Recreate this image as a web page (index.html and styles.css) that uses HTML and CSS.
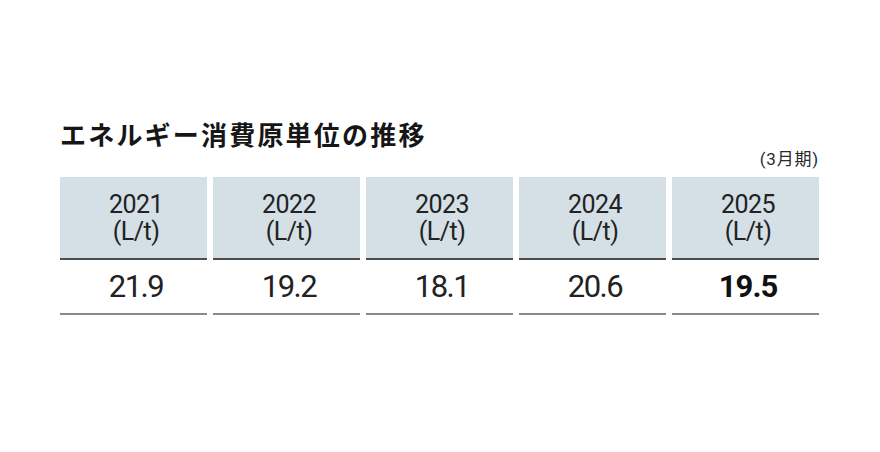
FILE: index.html
```html
<!DOCTYPE html>
<html lang="ja">
<head>
<meta charset="utf-8">
<link rel="stylesheet" href="styles.css">
</head>
<body>
<div class="wrap">
  <h2 class="title">エネルギー消費原単位の推移</h2>
  <div class="unit">(3月期)</div>
  <div class="grid">
    <div class="head"><span>2021</span><span>(L/t)</span></div>
    <div class="head"><span>2022</span><span>(L/t)</span></div>
    <div class="head"><span>2023</span><span>(L/t)</span></div>
    <div class="head"><span>2024</span><span>(L/t)</span></div>
    <div class="head"><span>2025</span><span>(L/t)</span></div>
    <div class="val">21.9</div>
    <div class="val">19.2</div>
    <div class="val">18.1</div>
    <div class="val">20.6</div>
    <div class="val strong">19.5</div>
  </div>
</div>
</body>
</html>
```
FILE: styles.css
```css
html, body {
  margin: 0;
  padding: 0;
  background: #ffffff;
}
body {
  width: 880px;
  height: 452px;
  overflow: hidden;
  color: #222222;
}
.wrap {
  width: 759px;
  margin-left: 60px;
  padding-top: 119px;
}
.title {
  margin: 0;
  font-family: "Noto Sans CJK JP", sans-serif;
  font-weight: 700;
  font-size: 26px;
  line-height: 30px;
  letter-spacing: 2.2px;
  color: #161616;
}
.unit {
  text-align: right;
  font-family: Roboto, "Noto Sans CJK JP", sans-serif;
  font-size: 17px;
  line-height: 18px;
  height: 18px;
  padding-top: 1px;
  padding-bottom: 9px;
  letter-spacing: 0.8px;
  color: #2a2a2a;
}
.grid {
  display: grid;
  grid-template-columns: repeat(5, 1fr);
  column-gap: 6px;
}
.head {
  height: 81px;
  background: #d5dfe6;
  border-bottom: 2px solid #4d4d4d;
  display: flex;
  flex-direction: column;
  justify-content: center;
  align-items: center;
  padding-left: 5px;
  font-family: Roboto, sans-serif;
  font-size: 25px;
  line-height: 27px;
  letter-spacing: -0.5px;
  color: #222222;
}
.val {
  height: 53px;
  border-bottom: 2px solid #8a8a8a;
  text-align: center;
  padding-left: 5px;
  font-family: Roboto, sans-serif;
  font-size: 31px;
  line-height: 53px;
  letter-spacing: -1.5px;
  color: #222222;
}
.val.strong {
  font-weight: 700;
  letter-spacing: -1px;
  color: #111111;
}
```
